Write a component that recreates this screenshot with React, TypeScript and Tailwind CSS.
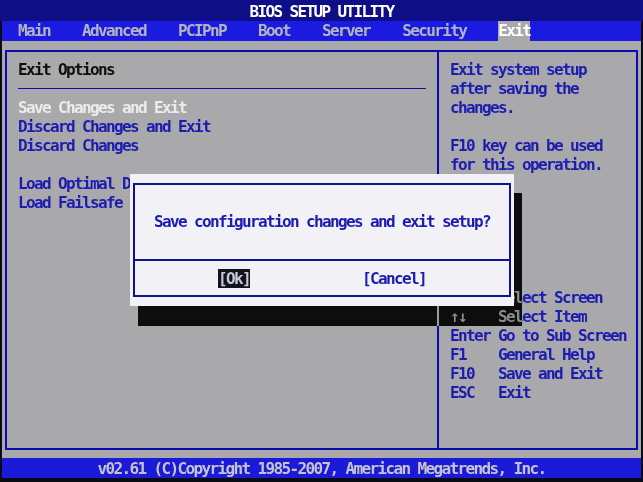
const mono =
  "font-['DejaVu_Sans_Mono','Liberation_Mono',monospace] text-[16px] tracking-[-1.63px] leading-[19px] font-bold";

const menu = ["Main", "Advanced", "PCIPnP", "Boot", "Server", "Security", "Exit"];

const keys: [string, string][] = [
  ["←→", "Select Screen"],
  ["↑↓", "Select Item"],
  ["Enter", "Go to Sub Screen"],
  ["F1", "General Help"],
  ["F10", "Save and Exit"],
  ["ESC", "Exit"],
];

// the dialog shadow turns what lies under it into grey-on-black
const shade = "[backdrop-filter:grayscale(1)_invert(1)_brightness(0.63)_contrast(1.56)]";

const Row = ({ children, className = "" }: { children?: React.ReactNode; className?: string }) => (
  <div className={`h-[19px] whitespace-pre ${className}`}>{children}</div>
);

export default function App() {
  return (
    <div className={`relative w-[643px] h-[482px] bg-[#0a0a12] px-[2px] flex flex-col overflow-hidden ${mono}`}>
      {/* title */}
      <div className="h-[21px] -mx-[2px] bg-[#0e0e86] text-white flex items-center justify-center pt-[2px]">
        BIOS SETUP UTILITY
      </div>

      {/* menu bar */}
      <div className="h-[20px] bg-[#1a1ae0] flex gap-[32px] pl-[16px] text-[#b4b4bc] leading-[20px]">
        {menu.map((m) =>
          m === "Exit" ? (
            <span key={m} className="bg-[#a9a9a9] text-white">
              {m}
            </span>
          ) : (
            <span key={m}>{m}</span>
          )
        )}
      </div>

      {/* body */}
      <div className="h-[417px] bg-[#a9a9ab] pt-[9px] px-[3px]">
        <div className="h-[400px] border-2 border-[#0c0cac] flex">
          <div className="w-[432px] border-r-2 border-[#0c0cac] pt-[7.5px] pl-[11px] text-[#1c1cb0]">
            <Row className="text-[#101010]">Exit Options</Row>
            <div className="h-[19px] flex items-center">
              <div className="w-[408px] h-[1px] bg-[#0c0cac]" />
            </div>
            <Row className="text-[#ececec]">Save Changes and Exit</Row>
            <Row>Discard Changes and Exit</Row>
            <Row>Discard Changes</Row>
            <Row />
            <Row>Load Optimal Defaults</Row>
            <Row>Load Failsafe Defaults</Row>
          </div>
          <div className="flex-1 pt-[7.5px] pl-[11px] text-[#1c1cb0]">
            <Row>Exit system setup</Row>
            <Row>after saving the</Row>
            <Row>changes.</Row>
            <Row />
            <Row>F10 key can be used</Row>
            <Row>for this operation.</Row>
            <div className="h-[114px]" />
            {keys.map(([k, d]) => (
              <Row key={k} className="flex">
                <span className="w-[48px]">{k}</span>
                <span>{d}</span>
              </Row>
            ))}
          </div>
        </div>
      </div>

      {/* footer */}
      <div className="h-[20px] bg-[#1a1ad8] text-[#c4c4cc] flex items-center justify-center">
        v02.61 (C)Copyright 1985-2007, American Megatrends, Inc.
      </div>
      <div className="h-[4px]" />

      {/* dialog shadow */}
      <div className={`absolute left-[138px] top-[306px] w-[384px] h-[20px] ${shade}`} />
      <div className={`absolute left-[514px] top-[193px] w-[8px] h-[113px] ${shade}`} />

      {/* dialog */}
      <div className="absolute left-[130px] top-[174px] w-[384px] h-[132px] bg-[#f2f2f6] pt-[9px] pb-[9px] px-[3px]">
        <div className="h-full border-2 border-[#12128e] flex flex-col">
          <div className="pt-[26.5px] h-[45.5px] text-center text-[#1c1cb0]">
            Save configuration changes and exit setup?
          </div>
          <div className="mt-[28px] h-[2px] bg-[#12128e]" />
          <div className="mt-[8px] h-[19px] flex pl-[83px]">
            <span className="bg-[#121222] text-[#c8c8d0]">[Ok]</span>
            <span className="ml-[112px] text-[#1c1cb0]">[Cancel]</span>
          </div>
        </div>
      </div>
    </div>
  );
}
